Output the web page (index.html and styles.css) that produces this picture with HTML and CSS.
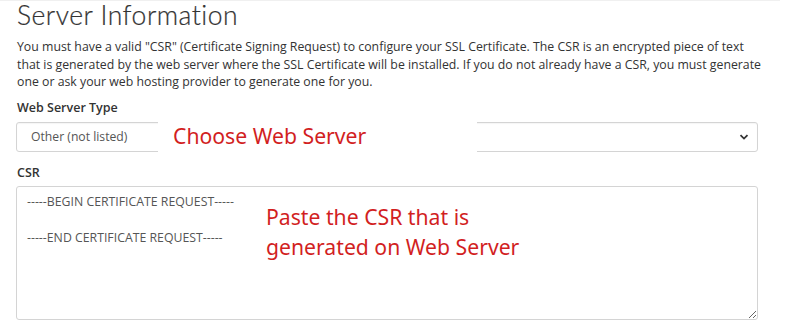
FILE: index.html
```html
<!DOCTYPE html>
<html>
<head>
<meta charset="utf-8">
<link rel="stylesheet" href="styles.css">
</head>
<body>
<div class="panel">
  <h1 class="title">Server Information</h1>
  <p class="intro">You must have a valid "CSR" (Certificate Signing Request) to configure your SSL Certificate. The CSR is an encrypted piece of text that is generated by the web server where the SSL Certificate will be installed. If you do not already have a CSR, you must generate one or ask your web hosting provider to generate one for you.</p>
  <div class="field">
    <label class="label">Web Server Type</label>
    <div class="select">
      <span class="select-text">Other (not listed)</span>
      <svg class="chevron" width="10" height="8" viewBox="0 0 10 8"><path d="M1.5 2.2 L5 5.6 L8.5 2.2" fill="none" stroke="#333" stroke-width="1.8"/></svg>
      <div class="note note-select">Choose Web Server</div>
    </div>
  </div>
  <div class="field">
    <label class="label">CSR</label>
    <div class="area-wrap">
      <textarea class="area">-----BEGIN CERTIFICATE REQUEST-----

-----END CERTIFICATE REQUEST-----</textarea>
      <div class="note note-area">Paste the CSR that is<br>generated on Web Server</div>
    </div>
  </div>
</div>
</body>
</html>
```
FILE: styles.css
```css
html, body {
  margin: 0;
  padding: 0;
  background: #fff;
}
.panel {
  width: 764px;
  border-top: 1px solid #f0f0f0;
  padding: 0 0 0 16px;
  font-family: "Open Sans", sans-serif;
  color: #333;
}
.title {
  margin: 0 0 0 1px;
  font-family: "Lato", sans-serif;
  font-weight: 300;
  font-size: 26.5px;
  line-height: 29px;
  color: #333;
  letter-spacing: 0.5px;
  -webkit-text-stroke: 0.2px #333;
}
.intro {
  margin: 8px 0 0 1px;
  font-size: 12.3px;
  line-height: 17.5px;
  color: #333;
  width: 744px;
}
.field {
  display: flex;
  flex-direction: column;
  width: 742px;
}
.label {
  margin-top: 8px;
  font-size: 12.5px;
  font-weight: 600;
  line-height: 18px;
  color: #333;
  padding-left: 1px;
}
.field + .field .label {
  margin-top: 12px;
}
.select {
  position: relative;
  margin-top: 5px;
  height: 28px;
  border: 1px solid #d4d4d4;
  border-radius: 3px;
  display: flex;
  align-items: center;
  justify-content: space-between;
  padding: 0 8px 0 14px;
  box-shadow: inset 0 1px 1px rgba(0,0,0,0.04);
}
.select-text {
  font-size: 12.2px;
  color: #555;
}
.chevron {
  display: block;
}
.note {
  position: absolute;
  background: #fff;
  color: #d21f1f;
  font-family: "Noto Sans", "Open Sans", sans-serif;
  font-size: 21.2px;
}
.note-select {
  left: 141px;
  top: -4px;
  width: 304px;
  height: 36px;
  line-height: 34px;
  padding-left: 15px;
}
.area-wrap {
  position: relative;
  margin-top: 4px;
}
.area {
  display: block;
  box-sizing: border-box;
  width: 742px;
  height: 134px;
  margin: 0;
  border: 1px solid #d4d4d4;
  border-radius: 3px;
  padding: 6px 10px;
  font-family: "Open Sans", sans-serif;
  font-size: 12.3px;
  line-height: 18px;
  color: #555;
  resize: vertical;
  outline: none;
}
.note-area {
  left: 250px;
  top: 16px;
  background: transparent;
  line-height: 30px;
}
```
